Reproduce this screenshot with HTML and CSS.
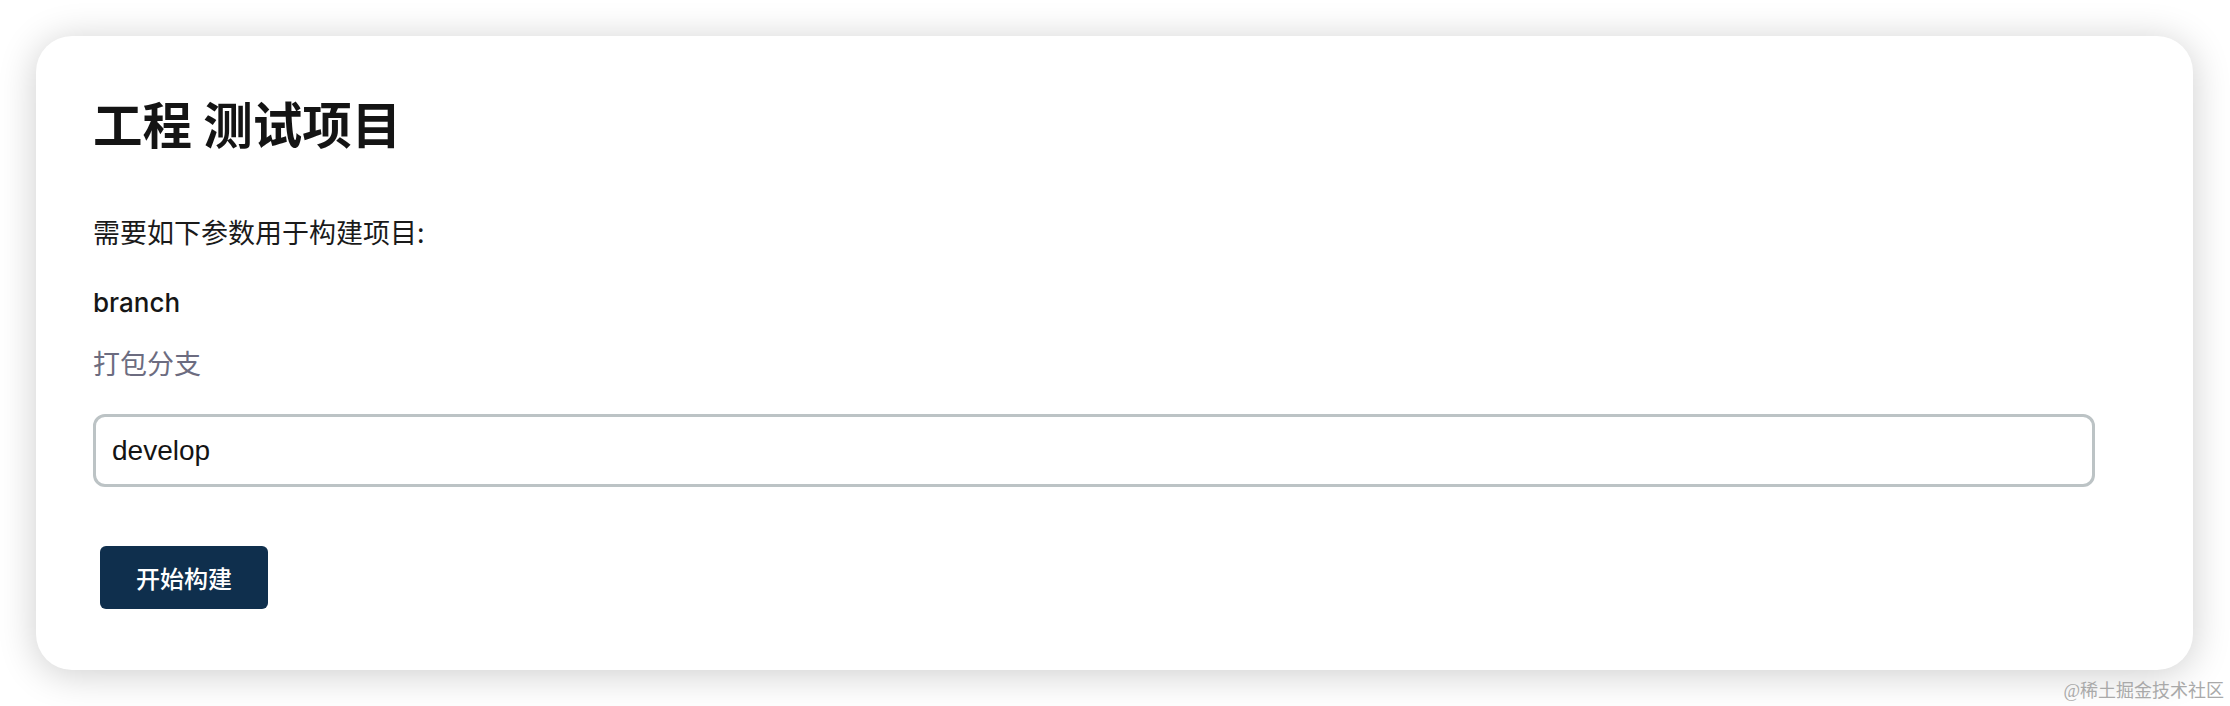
FILE: index.html
```html
<!DOCTYPE html>
<html lang="zh-CN">
<head>
<meta charset="utf-8">
<title>工程 测试项目</title>
<link rel="stylesheet" href="styles.css">
</head>
<body>
<main class="card">
  <h1 class="title">工程 测试项目</h1>
  <p class="intro">需要如下参数用于构建项目:</p>
  <div class="field">
    <div class="field-name">branch</div>
    <div class="field-desc">打包分支</div>
    <input class="field-input" type="text" value="develop">
  </div>
  <button class="build-btn" type="button">开始构建</button>
</main>
<div class="watermark">@稀土掘金技术社区</div>
</body>
</html>
```

FILE: styles.css
```css
html, body {
  margin: 0;
  padding: 0;
}
body {
  background: #ffffff;
  padding: 36px 37px 36px 36px;
  font-family: "Liberation Sans", "Noto Sans CJK SC", sans-serif;
  color: #161616;
  box-sizing: border-box;
  height: 706px;
  position: relative;
  overflow: hidden;
}
.card {
  background: #ffffff;
  border-radius: 36px;
  box-shadow: 0 4px 38px rgba(0, 0, 0, 0.2);
  padding: 58px 98px 61px 57px;
  display: flex;
  flex-direction: column;
  align-items: flex-start;
  height: 634px;
  box-sizing: border-box;
}
.title {
  margin: 0;
  font-family: "Noto Sans CJK SC", sans-serif;
  font-size: 49.5px;
  line-height: 58px;
  font-weight: 700;
  color: #141414;
}
.intro {
  margin: 60px 0 0 0;
  font-family: "Noto Sans CJK SC", sans-serif;
  font-size: 27px;
  line-height: 40px;
  color: #1a1a1a;
}
.field {
  display: flex;
  flex-direction: column;
  align-self: stretch;
  margin-top: 31px;
}
.field-name {
  font-family: Inter, "Noto Sans CJK SC", sans-serif;
  font-weight: 500;
  font-size: 26px;
  line-height: 40px;
  color: #161616;
}
.field-desc {
  margin-top: 20px;
  font-family: "Noto Sans CJK SC", sans-serif;
  font-size: 27px;
  line-height: 40px;
  color: #6c6c80;
}
.field-input {
  margin: 31px 0 0 0;
  height: 73px;
  box-sizing: border-box;
  border: 3px solid #bcc3c5;
  border-radius: 12px;
  padding: 0 16px;
  font-family: "Liberation Sans", "Noto Sans CJK SC", sans-serif;
  font-size: 28px;
  color: #141414;
  background: #ffffff;
  outline: none;
}
.build-btn {
  margin: 59px 0 0 7px;
  width: 168px;
  height: 63px;
  border: none;
  border-radius: 6px;
  background: #0f2f4d;
  color: #ffffff;
  font-family: "Noto Sans CJK SC", sans-serif;
  font-size: 24px;
  font-weight: 500;
  padding: 0;
}
.watermark {
  position: absolute;
  right: 6px;
  bottom: 3px;
  font-family: "Liberation Serif", "Noto Sans CJK SC", serif;
  font-size: 18px;
  line-height: 24px;
  color: #a9a9a9;
}
```
